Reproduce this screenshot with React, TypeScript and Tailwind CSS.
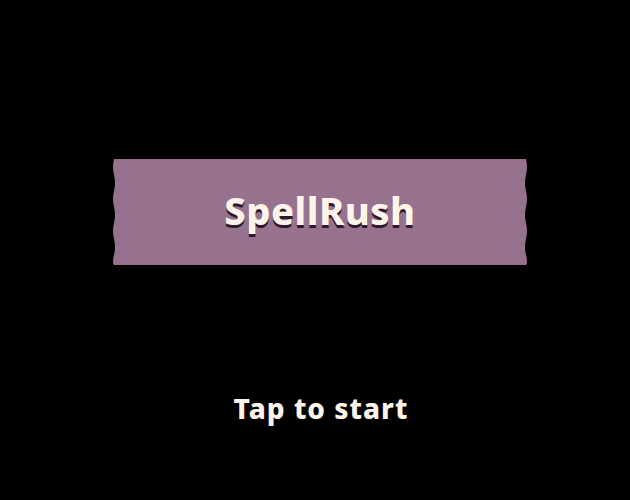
export default function App() {
  return (
    <div className="h-[500px] w-[630px] bg-black overflow-hidden" style={{ fontFamily: '"Noto Sans", "Open Sans", sans-serif' }}>
      <div className="pt-[159px] pl-[112px]">
        {/* Title banner */}
        <div className="relative flex h-[106px] w-[416px] items-center justify-center bg-[#96728f]">
          <svg className="absolute left-0 top-0 h-full w-[4px]" viewBox="0 0 4 106" preserveAspectRatio="none">
            <path d="M0 0 H2 Q0 8 2 16 T2 32 T2 48 T2 64 T2 80 T2 96 T2 106 H0 Z" fill="#000" />
          </svg>
          <svg className="absolute right-0 top-0 h-full w-[4px]" viewBox="0 0 4 106" preserveAspectRatio="none">
            <path d="M4 0 H2 Q4 8 2 16 T2 32 T2 48 T2 64 T2 80 T2 96 T2 106 H4 Z" fill="#000" />
          </svg>
          <h1 className="-mt-[4px] text-[38px] font-extrabold tracking-[0.5px] text-[#fff4ea] [text-shadow:0_3px_0_#2b1a2c]">
            SpellRush
          </h1>
        </div>
      </div>
      <div className="mt-[122px] pl-[12px] text-center">
        <p className="text-[28px] font-extrabold text-[#fff4ea] tracking-[1px]">Tap to start</p>
      </div>
    </div>
  );
}
